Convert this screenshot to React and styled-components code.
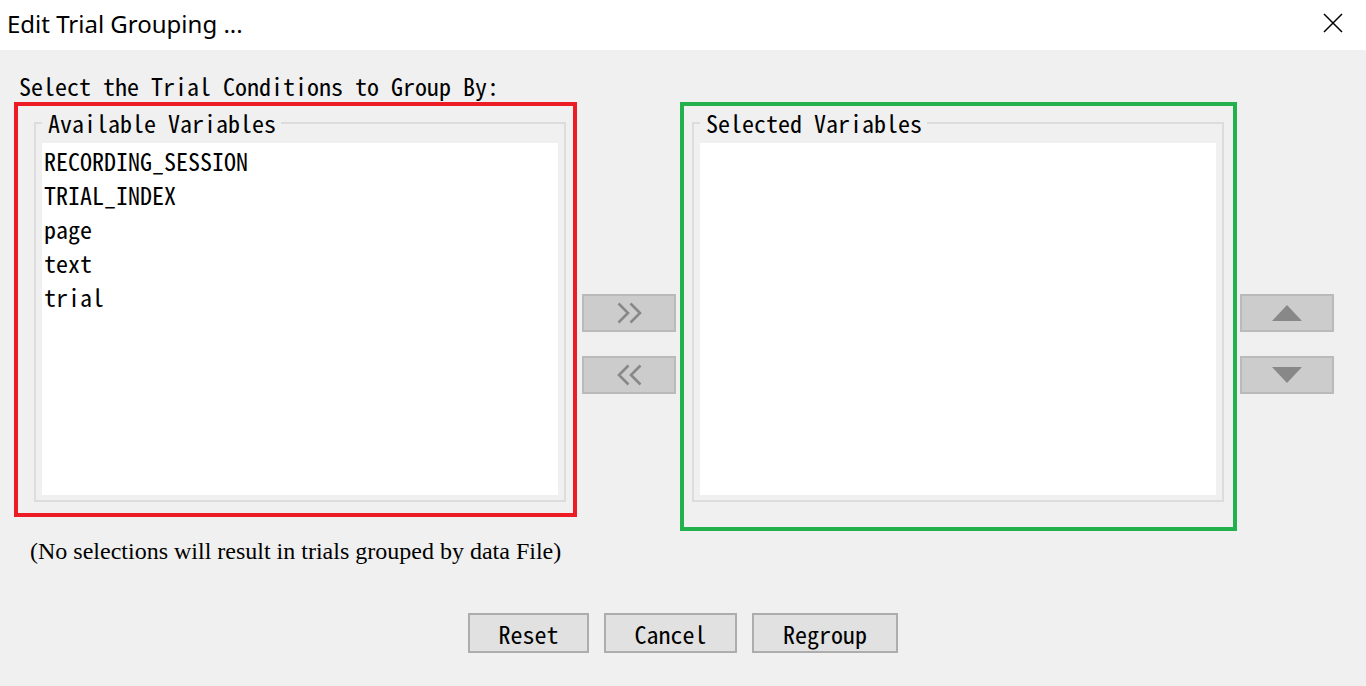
import React from "react";
import styled, { createGlobalStyle } from "styled-components";

const GlobalStyle = createGlobalStyle`
  html, body { margin: 0; padding: 0; background: #f0f0f0; }
  body { font-family: "Noto Sans", "Liberation Sans", sans-serif; }
`;

const MONO = `"Noto Sans Mono CJK SC", "DejaVu Sans Mono", monospace`;

const Window = styled.div`
  width: 1366px;
  height: 686px;
  background: #f0f0f0;
  display: flex;
  flex-direction: column;
  overflow: hidden;
`;

const TitleBar = styled.div`
  height: 50px;
  flex: none;
  background: #ffffff;
  display: flex;
  align-items: center;
  justify-content: space-between;
  padding: 0 23px 4px 7px;
  box-sizing: border-box;
`;

const Title = styled.div`
  font-family: "Noto Sans", "Liberation Sans", sans-serif;
  font-size: 24px;
  color: #000;
`;

const CloseBtn = styled.div`
  width: 20px;
  height: 20px;
  display: flex;
`;

const Body = styled.div`
  padding-left: 14px;
  display: flex;
  flex-direction: column;
`;

const Prompt = styled.div`
  font-family: ${MONO};
  font-size: 24px;
  line-height: 24px;
  color: #000;
  padding: 24px 0 0 5px;
  margin-bottom: 4px;
  white-space: pre;
`;

const MainRow = styled.div`
  display: flex;
  align-items: flex-start;
`;

const MarkBox = styled.div`
  box-sizing: border-box;
  width: ${(p) => p.$w}px;
  height: ${(p) => p.$h}px;
  border: 4px solid ${(p) => p.$color};
  padding: ${(p) => p.$pad};
`;

const Group = styled.fieldset`
  margin: 0;
  padding: 0 6px 5px 6px;
  border: 2px solid #dcdcdc;
  width: 532px;
  box-sizing: border-box;
  min-width: 0;
`;

const Legend = styled.legend`
  font-family: ${MONO};
  font-size: 24px;
  line-height: 22px;
  height: 22px;
  padding: 0 5px 0 6px;
  color: #000;
  white-space: pre;
`;

const List = styled.div`
  margin-top: 9px;
  width: 516px;
  height: 352px;
  background: #ffffff;
  padding: 1px 0 0 2px;
  box-sizing: border-box;
`;

const Item = styled.div`
  font-family: ${MONO};
  font-size: 24px;
  line-height: 34px;
  height: 34px;
  color: #000;
  white-space: pre;
`;

const SideCol = styled.div`
  width: ${(p) => p.$w}px;
  padding-left: ${(p) => p.$pl}px;
  box-sizing: border-box;
  padding-top: 192px;
  display: flex;
  flex-direction: column;
  gap: 24px;
`;

const ArrowBtn = styled.div`
  width: 94px;
  height: 38px;
  box-sizing: border-box;
  border: 2px solid #bababa;
  background: #cccccc;
  display: flex;
  align-items: center;
  justify-content: center;
`;

const Note = styled.div`
  font-family: "Liberation Serif", "Times New Roman", serif;
  font-size: 24px;
  line-height: 24px;
  color: #000;
  margin-top: 8px;
  padding-left: 16px;
`;

const ButtonRow = styled.div`
  display: flex;
  justify-content: center;
  gap: 15px;
  margin-top: 50px;
  width: 1366px;
  margin-left: -14px;
`;

const Button = styled.div`
  width: ${(p) => p.$w}px;
  height: 40px;
  box-sizing: border-box;
  border: 2px solid #adadad;
  background: #e1e1e1;
  display: flex;
  align-items: center;
  justify-content: center;
  font-family: ${MONO};
  font-size: 24px;
  color: #000;
`;

const Chevrons = ({ dir }) => (
  <svg width="25" height="22" viewBox="0 0 25 22">
    {dir === "right" ? (
      <g fill="none" stroke="#888" strokeWidth="2.6">
        <polyline points="1.5,1.5 11,11 1.5,20.5" />
        <polyline points="13.5,1.5 23,11 13.5,20.5" />
      </g>
    ) : (
      <g fill="none" stroke="#888" strokeWidth="2.6">
        <polyline points="11.5,1.5 2,11 11.5,20.5" />
        <polyline points="23.5,1.5 14,11 23.5,20.5" />
      </g>
    )}
  </svg>
);

const Tri = ({ up }) => (
  <svg width="30" height="16" viewBox="0 0 30 16">
    <polygon points={up ? "15,0 30,16 0,16" : "0,0 30,0 15,16"} fill="#888" />
  </svg>
);

const available = ["RECORDING_SESSION", "TRIAL_INDEX", "page", "text", "trial"];

export default function App() {
  return (
    <>
      <GlobalStyle />
      <Window>
        <TitleBar>
          <Title>Edit Trial Grouping ...</Title>
          <CloseBtn>
            <svg width="20" height="20" viewBox="0 0 20 20">
              <path d="M1 1 L19 19 M19 1 L1 19" stroke="#000" strokeWidth="1.5" />
            </svg>
          </CloseBtn>
        </TitleBar>
        <Body>
          <Prompt>Select the Trial Conditions to Group By:</Prompt>
          <MainRow>
            <MarkBox $w={563} $h={415} $color="#ed1c24" $pad="6px 7px 0 16px">
              <Group>
                <Legend>Available Variables</Legend>
                <List>
                  {available.map((v) => (
                    <Item key={v}>{v}</Item>
                  ))}
                </List>
              </Group>
            </MarkBox>
            <SideCol $w={103} $pl={5}>
              <ArrowBtn>
                <Chevrons dir="right" />
              </ArrowBtn>
              <ArrowBtn>
                <Chevrons dir="left" />
              </ArrowBtn>
            </SideCol>
            <MarkBox $w={557} $h={429} $color="#22b14c" $pad="6px 9px 0 8px">
              <Group>
                <Legend>Selected Variables</Legend>
                <List />
              </Group>
            </MarkBox>
            <SideCol $w={97} $pl={3}>
              <ArrowBtn>
                <Tri up />
              </ArrowBtn>
              <ArrowBtn>
                <Tri />
              </ArrowBtn>
            </SideCol>
          </MainRow>
          <Note>(No selections will result in trials grouped by data File)</Note>
          <ButtonRow>
            <Button $w={121}>Reset</Button>
            <Button $w={133}>Cancel</Button>
            <Button $w={146}>Regroup</Button>
          </ButtonRow>
        </Body>
      </Window>
    </>
  );
}
